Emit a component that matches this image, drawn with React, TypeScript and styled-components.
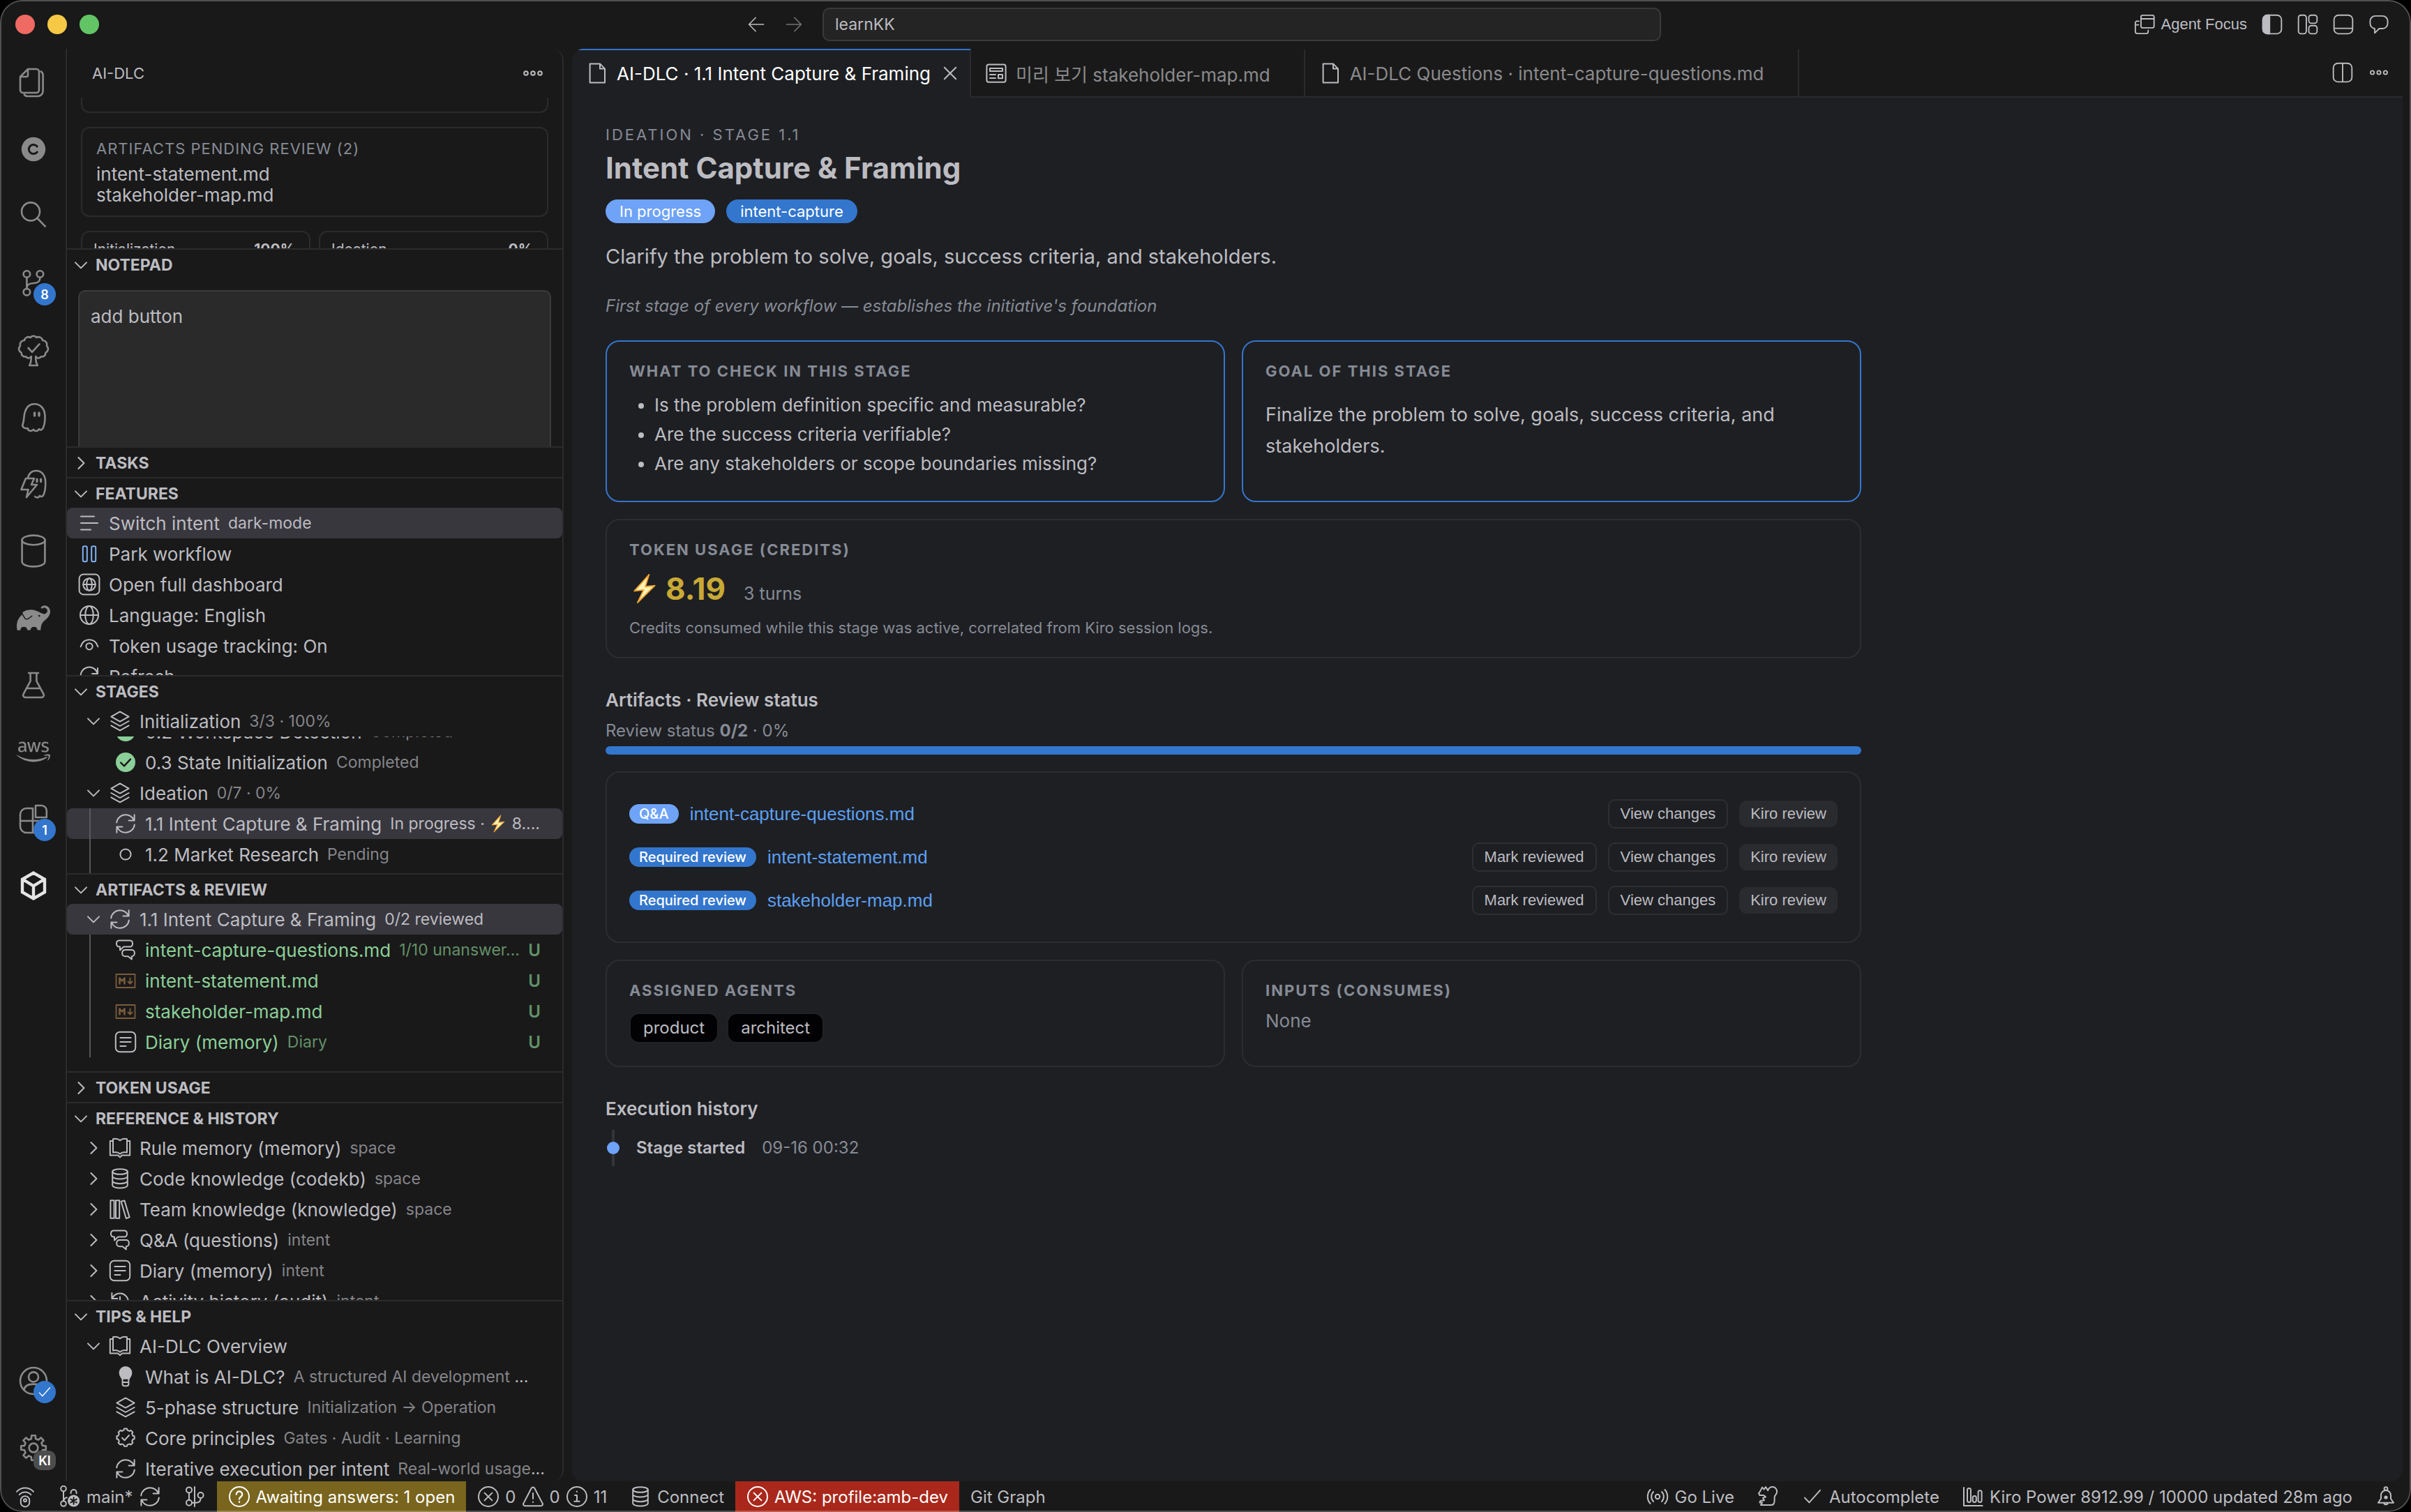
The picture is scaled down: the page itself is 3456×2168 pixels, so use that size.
import React from 'react';
import styled, { createGlobalStyle, css } from 'styled-components';
import { SiGradle } from 'react-icons/si';
import { FaAws } from 'react-icons/fa';

const c = {
  chrome: '#191919',
  editor: '#1e1f23',
  line: '#2b2b2c',
  text: '#bcbcc1',
  dim: '#85858a',
  slate: '#868b95',
  blue: '#3376cd',
  sky: '#6ea3f7',
  link: '#5b9ff2',
  green: '#8bcf98',
  greenDim: '#639068',
  selected: '#38373e',
  icon: '#8a8a8a',
};
const ui = `Inter, "Noto Sans CJK KR", sans-serif`;
const system = `"Liberation Sans", Arial, sans-serif`;

const Global = createGlobalStyle`
  * { box-sizing: border-box; }
  body { margin: 0; background: #000; color: ${c.text}; font-family: ${ui}; }
  button { font: inherit; color: inherit; background: none; border: 0; padding: 0; margin: 0; text-align: left; cursor: pointer; }
  ul { list-style: none; margin: 0; padding: 0; }
  h1, h2, h3, p { margin: 0; font-weight: 400; }
`;

/* ---------- icons ---------- */

const Svg = styled.svg<{ $s?: number }>`
  width: ${p => p.$s ?? 32}px;
  height: ${p => p.$s ?? 32}px;
  flex: none;
  display: block;
  fill: none;
  stroke: currentColor;
  stroke-linecap: round;
  stroke-linejoin: round;
`;

const small: Record<string, React.ReactNode> = {
  chevronDown: <path d="M4 6.2l4 4 4-4" />,
  chevronRight: <path d="M6.2 4l4 4-4 4" />,
  more: <><circle cx="3" cy="8" r="1.4" /><circle cx="8" cy="8" r="1.4" /><circle cx="13" cy="8" r="1.4" /></>,
  arrowLeft: <path d="M14.500 8H2M7.500 2L1.600 8l5.900 6" />,
  arrowRight: <path d="M1.500 8H14M8.500 2l5.900 6-5.900 6" />,
  close: <path d="M3.900 3.900l8.200 8.200M12.100 3.900l-8.200 8.200" />,
  file: <path d="M2.8 1.2h7.2l3.5 3.6v10H2.8zM10 1.2v3.6h3.5" />,
  preview: <><rect x="1.2" y="1.8" width="13.6" height="12.6" rx="1.4" /><path d="M3.5 4.5h9v2h-9zM3.5 9h4M3.5 11.5h4M9.5 9h3v2.6h-3z" /></>,
  list: <path d="M2 3.3h9.5M2 8h12M2 12.7h7" />,
  pause: <><rect x="3.4" y="2.6" width="3" height="11" rx="1" /><rect x="9.6" y="2.6" width="3" height="11" rx="1" /></>,
  dashboard: <><rect x=".8" y=".8" width="14.4" height="14.4" rx="3" /><circle cx="8" cy="8" r="4.4" /><ellipse cx="8" cy="8" rx="1.9" ry="4.4" /><path d="M3.6 8h8.8" /></>,
  globe: <><circle cx="8" cy="8" r="6.5" /><ellipse cx="8" cy="8" rx="2.9" ry="6.5" /><path d="M1.5 8h13" /></>,
  eye: <><path d="M1.8 8.6C2.8 5.4 5.2 3.6 8 3.6s5.2 1.8 6.2 5" /><circle cx="8" cy="8.4" r="2.3" /></>,
  refresh: <path d="M1.8 8A6.2 6.2 0 0 1 14 6M14 2v4h-4M14 9a6.2 6.2 0 0 1-2 4" />,
  sync: <path d="M1.600 7.200C2 4 4.700 1.600 8 1.600c2.500 0 4.700 1.400 5.800 3.600M14.300 1.600v4.200h-4M14.400 8.800C14 12 11.300 14.400 8 14.400c-2.500 0-4.700-1.400-5.800-3.600M1.700 14.400v-4.200h4" />,
  layers: <path d="M8 1.200l6.300 3.600L8 8.300 1.700 4.800zM1.700 8l6.300 3.500L14.300 8M1.700 11.200l6.300 3.500 6.300-3.500" />,
  circle: <circle cx="8" cy="8" r="3.800" />,
  check: <path d="M2.500 8.800l3.200 3.400 7.800-8.800" />,
  checkFilled: <><circle cx="8" cy="8" r="7" fill="currentColor" stroke="none" /><path d="M4.600 8.300l2.400 2.400 4.500-4.900" stroke="#191919" strokeWidth="1.200" /></>,
  discuss: <path d="M3.500 1.200h7.500a2 2 0 0 1 2 2v.6a2 2 0 0 1-2 2H6.600L4 8.200V5.800h-.5a2 2 0 0 1-2-2v-.6a2 2 0 0 1 2-2zM7.600 8h4.800a2 2 0 0 1 2 2v.6a2 2 0 0 1-2 2v2.200l-2.600-2.200H7.600a2 2 0 0 1-2-2V10a2 2 0 0 1 2-2z" />,
  note: <><rect x=".9" y=".9" width="14.200" height="14.200" rx="3" /><path d="M4.200 5h7.600M4.200 8h7.600M4.200 11h4" /></>,
  book: <path d="M8 2.600C6.800 1.500 4.800 1.200 3 1.600v9.600c1.800-.4 3.800 0 5 1.100 1.200-1.100 3.200-1.500 5-1.100V1.600c-1.800-.4-3.800-.1-5 1zM3 3H.9v10.200h5.600L8 14.600l1.500-1.400h5.600V3H13" />,
  database: <><ellipse cx="8" cy="3" rx="5.400" ry="1.900" /><path d="M2.600 3v9.800c0 1.100 2.400 2 5.400 2s5.400-.9 5.400-2V3M2.600 6.300c0 1.100 2.400 2 5.400 2s5.400-.9 5.400-2M2.600 9.600c0 1.100 2.400 2 5.400 2s5.400-.9 5.400-2" /></>,
  library: <path d="M1.200 1.600h2.600v12.800H1.200zM5 1.600h2.600v12.800H5zM8.800 2.400l2.400-.7 3.600 12-2.400.8z" />,
  history: <path d="M2.200 2v4h4M2.400 6A6 6 0 1 1 2 9M8 4.800V8.500l2.500 1.500" />,
  bulb: <><path d="M8 1a4.200 4.200 0 0 1 4.200 4.200c0 1.800-1.100 3-1.700 4.200h-5c-.6-1.200-1.700-2.400-1.700-4.200A4.200 4.200 0 0 1 8 1z" fill="currentColor" /><path d="M5.800 9.500v3.700A1.400 1.400 0 0 0 7.200 14.600h1.600a1.400 1.400 0 0 0 1.400-1.400V9.500M5.800 12h4.400" /></>,
  question: <><circle cx="8" cy="8" r="7" /><path d="M5.900 6.300a2.100 2.100 0 1 1 3.200 1.800c-.8.500-1.100.9-1.100 1.600M8 11.700v.2" strokeWidth="1.200" /></>,
  error: <><circle cx="8" cy="8" r="7" /><path d="M5.300 5.300l5.400 5.400M10.700 5.300l-5.400 5.400" /></>,
  warning: <path d="M6.900 1.900L1.200 12.800a1.200 1.200 0 0 0 1.100 1.800h11.400a1.200 1.200 0 0 0 1.100-1.800L9.100 1.900a1.250 1.250 0 0 0-2.200 0zM8 5.500v4M8 11.800v.2" />,
  info: <><circle cx="8" cy="8" r="7" /><path d="M6.500 7H8v4.400M6.200 11.400h3.600M7.900 4.300v.2" /></>,
  remote: <><path d="M2 4.400a8 8 0 0 1 12 0M3.900 6.600a5.500 5.500 0 0 1 8.200 0" /><rect x="4.900" y="7.600" width="6.200" height="7.600" rx="3" /><circle cx="8" cy="10.600" r="1" /></>,
  gitStar: <><circle cx="3.500" cy="2.300" r="1.900" /><circle cx="3.500" cy="13" r="1.900" /><path d="M3.500 4.200v6.900M3.500 11c.3-1.400 1-2 2.400-2.400M8.800 5.600V5a2 2 0 0 1 4 0v.6" /><circle cx="10.800" cy="11" r="4.300" fill="currentColor" stroke="none" /><path d="M10.800 8.600v4.800M8.700 9.800l4.200 2.400M12.900 9.800l-4.200 2.400" stroke="#191919" /></>,
  branchLine: <><circle cx="4" cy="3.200" r="2" /><circle cx="4" cy="12.400" r="2" /><circle cx="12.300" cy="7" r="2" /><path d="M4 5.200v5.200M8 1v14M12.300 9c0 2.600-1.200 3.400-4.300 3.400H6" /></>,
  broadcast: <><circle cx="8" cy="8" r="1.600" /><path d="M5 11.500a5 5 0 0 1 0-7M11 4.500a5 5 0 0 1 0 7M2.800 13a7.500 7.500 0 0 1 0-10M13.200 3a7.500 7.500 0 0 1 0 10" /></>,
  fox: <path d="M2.500 4.200L4 1.300l1.300 1.500L6.500 1l1.600 2.600C8.600 2 9.800 1 11.400 1c2.300 0 3.700 2.400 2.900 4.600-.5 1.300-1.500 1.500-1.500 2.900v2.300c0 2-.6 3.200-2.300 3.200H3l1-1.800H2.200l.5-1.200 2.800-.4-1-1.600 2-.8-1.500-1.200H2.200L1.500 5.500z" />,
  chart: <><path d="M1.500 1.500v13h13.300" /><rect x="4" y="2" width="2.500" height="10" rx="1.200" /><rect x="7.900" y="7.500" width="2.500" height="4.500" rx="1.200" /><rect x="11.800" y="3.600" width="2.500" height="8.400" rx="1.200" /></>,
  bell: <><path d="M2.500 12.400l2-3V7a3.500 3.500 0 0 1 7 0v2.400l2 3zM6.600 12.600a1.450 1.450 0 0 0 2.800 0" /><circle cx="8" cy="2.300" r="1.200" /><circle cx="8" cy="8.500" r="1.300" fill="currentColor" stroke="none" /></>,
  agent: <><rect x="5.300" y="1" width="10" height="9.600" rx="1.300" /><path d="M5.300 3.700h10M3.800 5.500H2.500A1.300 1.300 0 0 0 1 6.800V13.500A1.500 1.500 0 0 0 2.500 15h6.800a1.500 1.500 0 0 0 1.500-1.500v-1M1 8.300h2.500" /></>,
  layoutLeft: <><rect x=".9" y=".9" width="14.200" height="14.200" rx="3.400" /><path d="M4.300.9H6v14.200H4.300A3.400 3.400 0 0 1 .9 11.700V4.300A3.400 3.400 0 0 1 4.300.9z" fill="currentColor" /></>,
  layoutGrid: <><rect x=".9" y=".9" width="6" height="14.200" rx="1.900" /><rect x="8.800" y=".9" width="6.300" height="6.200" rx="1.900" /><rect x="8.800" y="8.900" width="6.300" height="6.200" rx="1.900" /></>,
  layoutBottom: <><rect x=".9" y=".9" width="14.200" height="14.200" rx="3.400" /><path d="M1 11h14" /></>,
  split: <><rect x=".9" y=".9" width="14.200" height="14.200" rx="3.400" /><path d="M8 1v14" /></>,
  chat: <path d="M5.300 1.500h5.400a4 4 0 0 1 4 4v1.700a4 4 0 0 1-4 4H8.200L4.800 14.600v-3.400a4 4 0 0 1-3.500-4V5.500a4 4 0 0 1 4-4z" />,
};

const Icon = ({ n, s }: { n: string; s?: number }) => (
  <Svg $s={s} viewBox="0 0 16 16" strokeWidth="1" aria-hidden="true">{small[n]}</Svg>
);

const notched = (cx: number, cy: number, teeth: number, outer: number, inner: number) => {
  const pts: string[] = [];
  const step = (Math.PI * 2) / teeth;
  for (let i = 0; i < teeth; i++) {
    const a = i * step - Math.PI / 2;
    [[-0.3, inner], [-0.2, outer], [0.2, outer], [0.3, inner]].forEach(([k, r]) =>
      pts.push(`${(cx + r * Math.cos(a + k * step)).toFixed(2)} ${(cy + r * Math.sin(a + k * step)).toFixed(2)}`));
  }
  return `M${pts.join('L')}Z`;
};

const Seal = () => (
  <Svg viewBox="0 0 16 16" strokeWidth="1" aria-hidden="true">
    <path d={notched(8, 7.6, 8, 6.4, 5.4)} /><path d="M5.500 7.800l1.800 1.800 3.200-3.600" />
  </Svg>
);

const Markdown = () => (
  <Svg viewBox="0 0 32 32" strokeWidth="1.800" color="#7a5c3c" aria-hidden="true">
    <path d="M2.500 7h27v19h-27z" /><path d="M7.500 20.500v-8l3.500 4 3.500-4v8" strokeWidth="2.600" /><path d="M22.500 12.500v8M19.500 17.500l3 3 3-3" strokeWidth="2" />
  </Svg>
);

const Bolt = ({ s }: { s: number }) => (
  <Svg $s={s} viewBox="0 0 24 24" strokeWidth="1" aria-hidden="true">
    <path d="M15.500 1L4 13.800l7.200-.8L6.500 23 20 9.600l-7.500.9z" fill="#fdf2b4" stroke="#f2a431" />
  </Svg>
);

const big: Record<string, React.ReactNode> = {
  files: <><path d="M8 2.500h6a2 2 0 0 1 2 2v13a2 2 0 0 1-2 2H4.500a2 2 0 0 1-2-2V8zM8 2.500V7a1 1 0 0 1-1 1H2.500" /><path d="M17.300 4.200a3 3 0 0 1 1.500 2.600v11.400a3.800 3.800 0 0 1-3.800 3.800H8a3 3 0 0 1-2.600-1.300" /></>,
  copyright: <><circle cx="12" cy="12" r="8.600" fill="currentColor" stroke="none" /><path d="M14.600 10a3.300 3.300 0 1 0 0 4" stroke="#191919" strokeWidth="1.500" /></>,
  search: <><circle cx="10" cy="8.700" r="6.500" /><path d="M14.800 13.500l5.600 5.800" /></>,
  git: <><circle cx="7.200" cy="5.500" r="2.400" /><circle cx="16.700" cy="5.500" r="2.400" /><circle cx="7.200" cy="18.400" r="2.400" /><path d="M7.200 7.900V16M16.700 7.900c0 3-1.300 4-4.500 4.100-3.200.1-5 .8-5 3.500" /></>,
  tree: <path d="M10.300 17c-1.300 1.100-2.800.9-3.700-.3-1.900.3-3.400-1-3.300-2.900-2-1-2.300-3.300-.8-4.900-.5-2.200.9-3.800 3-3.900.5-2.100 2.600-3 4.400-2 .8-1.500 3.400-1.500 4.200 0 1.800-1 3.900-.1 4.400 2 2.100.1 3.500 1.700 3 3.900 1.500 1.600 1.200 3.900-.8 4.900.1 1.900-1.400 3.200-3.300 2.900-.9 1.200-2.400 1.400-3.700.3M10.300 16.500c.3 2.500-.2 4.700-1.200 6.500h5.800c-1-1.800-1.500-4-1.200-6.500M8.300 10.500l2.700 2.900 5.200-5.700" />,
  ghost: <><path d="M12.600 2.600c4.500 0 7.300 3.400 7.600 8 .2 3.400-.1 6.300-1.200 8.900-.7 1.700-2 2.200-3 1.100-.9 1.700-3.100 1.900-4 .3-1.100 1.400-4 1.600-4.100-.9-2.500.6-4.400-1-3.500-3.200 1-2.300.5-5.500 1.500-8.500 1.100-3.500 3.500-5.700 6.700-5.700z" /><path d="M12.800 9v2M16 9v2" strokeWidth="1.700" /></>,
  ghostBolt: <><path d="M8 8C8.600 4.300 11 2.500 14 2.500c4 0 6.500 3.400 6.600 8 .1 3.800-.3 6.500-1.200 8.800-.6 1.700-1.900 2.200-2.900 1.100-.8 1.500-2.400 1.700-3.400.6M8 8h4.500l-2 4.500h4L7 21.500l1.300-5.500H3.200L6.500 8z" /><path d="M14.500 8.500v1.800M17.300 8.500v1.800" strokeWidth="1.600" /></>,
  cylinder: <><ellipse cx="12" cy="4.200" rx="8.200" ry="3.400" /><path d="M3.800 4.200v15.600c0 1.900 3.700 3.400 8.200 3.400s8.200-1.500 8.200-3.400V4.200" /></>,
  flask: <path d="M8.500 3.500h7M9.800 3.500v5.800L4.800 18.600a1.600 1.600 0 0 0 1.400 2.400h11.600a1.600 1.600 0 0 0 1.400-2.400L14.200 9.300V3.500M7.300 14.500h9.400" />,
  extensions: <path d="M11.500 4.500H7a4.500 4.500 0 0 0-4.500 4.500v8.500A4.500 4.500 0 0 0 7 22h9a4 4 0 0 0 4-4v-4.500H2.500M11.500 4.500V22M13.500 2.500h4.200a3.700 3.700 0 0 1 3.700 3.700V11h-7.900z" />,
  cube: <path d="M12 2.800l8 4.600v9.200l-8 4.600-8-4.600V7.400zM4.500 7.500L12 12.200l7.500-4.700M12 12.200V21" strokeWidth="2.200" strokeLinejoin="miter" />,
  account: <><circle cx="12" cy="12" r="9.500" /><circle cx="12" cy="9.200" r="3.500" /><path d="M5.200 18.500c.4-2.700 3-4.200 6.800-4.200s6.400 1.500 6.800 4.200" /></>,
  gear: <><path d={notched(12, 12, 8, 9, 6.700)} /><circle cx="12" cy="12" r="3.200" /></>,
};
const BigIcon = ({ n }: { n: string }) => (
  <Svg $s={48} viewBox="0 0 24 24" strokeWidth="1.300" aria-hidden="true">{big[n]}</Svg>
);

/* ---------- window ---------- */

const Window = styled.div`
  position: relative;
  display: flex;
  flex-direction: column;
  height: 100vh;
  border-radius: 32px;
  overflow: hidden;
  background: ${c.chrome};
  &::after {
    content: '';
    position: absolute;
    inset: 0;
    border: 2px solid rgba(255, 255, 255, 0.24);
    border-radius: 32px;
    pointer-events: none;
  }
`;
const TitleBar = styled.header`
  flex: none;
  display: grid;
  grid-template-columns: 1fr auto 1fr;
  align-items: center;
  height: 70px;
`;
const Lights = styled.div`
  display: flex;
  gap: 18px;
  padding-left: 22px;
`;
const Light = styled.button<{ $c: string }>`
  width: 28px;
  height: 28px;
  border-radius: 50%;
  background: ${p => p.$c};
`;
const Nav = styled.div`
  display: flex;
  align-items: center;
  gap: 28px;
  padding-right: 4px;
`;
const IconButton = styled.button<{ $faded?: boolean }>`
  display: flex;
  align-items: center;
  gap: 8px;
  opacity: ${p => (p.$faded ? 0.55 : 1)};
`;
const Command = styled.button`
  width: 1202px;
  height: 48px;
  padding: 0 16px;
  border: 2px solid #3a3a3a;
  border-radius: 10px;
  background: #242424;
  font-size: 23px;
`;
const TitleActions = styled.div`
  display: flex;
  justify-content: flex-end;
  gap: 21px;
  padding-right: 31px;
  font: 22px ${system};
`;
const Body = styled.div`
  flex: 1;
  min-height: 0;
  display: flex;
`;

/* ---------- activity bar ---------- */

const Activity = styled.nav`
  flex: none;
  display: flex;
  flex-direction: column;
  width: 96px;
  border-right: 2px solid ${c.line};
  color: ${c.icon};
`;
const Spacer = styled.div`
  flex: 1;
`;
const ActivityItem = styled.button<{ $on?: boolean }>`
  position: relative;
  display: flex;
  align-items: center;
  justify-content: center;
  height: 96px;
  padding-left: 2px;
  color: ${p => (p.$on ? '#e4e4e4' : 'inherit')};
`;
const Badge = styled.span<{ $gray?: boolean }>`
  position: absolute;
  right: 14px;
  top: 48px;
  display: flex;
  align-items: center;
  justify-content: center;
  width: 32px;
  height: 32px;
  border-radius: 16px;
  background: ${c.blue};
  color: #fff;
  font-size: 18px;
  font-weight: 600;
  ${p => p.$gray && css`
    top: 52px;
    height: 28px;
    border-radius: 10px;
    background: #4d4d4d;
  `}
`;

/* ---------- sidebar ---------- */

const Side = styled.aside`
  flex: none;
  display: flex;
  flex-direction: column;
  width: 712px;
  border-right: 2px solid ${c.line};
  border-radius: 0 16px 16px 0;
  font-size: 26px;
`;
const SideTitle = styled.div`
  flex: none;
  display: flex;
  align-items: center;
  justify-content: space-between;
  height: 70px;
  padding: 0 26px 0 36px;
  font-size: 22px;
`;
const PaneHead = styled.button`
  flex: none;
  display: flex;
  align-items: center;
  gap: 5px;
  height: 44px;
  padding: 2px 4px 0;
  border-top: 2px solid ${c.line};
  font-size: 23px;
  font-weight: 700;
`;
const Pane = styled.div<{ $grow?: number }>`
  flex: ${p => p.$grow ?? 240} 1 0;
  min-height: 0;
  overflow: hidden;
`;
const Overview = styled.div`
  display: grid;
  grid-template-columns: 1fr 1fr;
  gap: 20px 12px;
  padding: 0 20px;
`;
const SideCard = styled.div<{ $cut?: boolean }>`
  grid-column: 1 / -1;
  padding: 14px 20px;
  border: 2px solid ${c.line};
  border-radius: 12px;
  line-height: 30px;
  ${p => p.$cut && css`
    height: 22px;
    padding: 0;
    border-top: 0;
    border-radius: 0 0 12px 12px;
  `}
`;
const SideCardTitle = styled.h3`
  margin-bottom: 7px;
  color: ${c.slate};
  font-size: 22px;
  letter-spacing: 1px;
`;
const PhaseCard = styled.div`
  display: flex;
  justify-content: space-between;
  padding: 10px 20px 12px 16px;
  border: 2px solid ${c.line};
  border-radius: 12px;
  font-size: 21px;
  line-height: 30px;
`;
const Notes = styled.textarea`
  display: block;
  width: calc(100% - 32px);
  height: 260px;
  margin: 16px;
  padding: 18px 16px;
  border: 2px solid #3b3b3b;
  border-radius: 10px;
  background: #2a2a2a;
  color: inherit;
  font: 26px/36px ${ui};
  resize: none;
`;
const Row = styled.button<{ $left: number; $selected?: boolean; $guide?: boolean }>`
  position: relative;
  display: flex;
  align-items: center;
  width: 100%;
  height: 44px;
  padding: 0 28px 0 ${p => p.$left}px;
  border-radius: 8px;
  white-space: pre;
  background: ${p => (p.$selected ? c.selected : 'none')};
  ${p => p.$guide && css`
    &::before {
      content: '';
      position: absolute;
      left: 32px;
      top: 0;
      bottom: 0;
      width: 2px;
      background: #58585a;
    }
  `}
`;
const Tint = styled.span<{ $c?: string }>`
  display: flex;
  color: ${p => p.$c ?? 'inherit'};
`;
const Twistie = styled.span`
  margin-right: 6px;
`;
const Label = styled.span<{ $green?: boolean }>`
  margin-left: 12px;
  color: ${p => (p.$green ? c.green : 'inherit')};
`;
const Desc = styled.span<{ $c?: string }>`
  display: flex;
  align-items: center;
  margin-left: 12px;
  font-size: 23px;
  color: ${p => p.$c ?? c.dim};
`;
const GitFlag = styled.span`
  margin-left: auto;
  width: 24px;
  text-align: center;
  color: ${c.greenDim};
  font-size: 24px;
  font-weight: 600;
`;
const Sliding = styled.div`
  overflow: hidden;
  & > ul { margin-top: -29px; }
`;

type RowProps = {
  icon: string;
  label: string;
  desc?: React.ReactNode;
  level?: 'flat' | 'group' | 'leaf';
  open?: boolean;
  selected?: boolean;
  guide?: boolean;
  tint?: string;
  flag?: boolean;
};
const left = { flat: 16, group: 22, leaf: 68 };
const TreeRow = ({ icon, label, desc, level = 'leaf', open, selected, guide, tint, flag }: RowProps) => (
  <li>
    <Row $left={left[level]} $selected={selected} $guide={guide}>
      {level === 'group' && <Twistie><Icon n={open ? 'chevronDown' : 'chevronRight'} /></Twistie>}
      <Tint $c={tint}>{icon === 'md' ? <Markdown /> : icon === 'seal' ? <Seal /> : <Icon n={icon} />}</Tint>
      <Label $green={flag}>{label}</Label>
      {desc && <Desc $c={flag ? c.greenDim : selected ? c.text : undefined}>{desc}</Desc>}
      {flag && <GitFlag>U</GitFlag>}
    </Row>
  </li>
);
const Head = ({ children, open = true }: { children: React.ReactNode; open?: boolean }) => (
  <PaneHead aria-expanded={open}><Icon n={open ? 'chevronDown' : 'chevronRight'} />{children}</PaneHead>
);
const Bright = styled.span`
  color: ${c.text};
`;

/* ---------- editor ---------- */

const Editor = styled.section`
  flex: 1;
  min-width: 0;
  display: flex;
  flex-direction: column;
  margin: 0 12px;
  border-radius: 16px;
  overflow: hidden;
  background: ${c.editor};
`;
const Tabs = styled.div`
  flex: none;
  display: flex;
  height: 70px;
  background: ${c.chrome};
`;
const Tab = styled.button<{ $on?: boolean }>`
  display: flex;
  align-items: center;
  gap: 12px;
  padding: 0 ${p => (p.$on ? 12 : 48)}px 0 20px;
  border-right: 2px solid ${c.line};
  border-bottom: 2px solid ${p => (p.$on ? c.editor : c.line)};
  border-top: 2px solid ${p => (p.$on ? c.blue : 'transparent')};
  background: ${p => (p.$on ? c.editor : 'none')};
  color: ${p => (p.$on ? '#fff' : '#8a8a8c')};
  font-size: 26px;
  white-space: nowrap;
  svg { color: ${c.text}; }
`;
const TabActions = styled.div`
  flex: 1;
  display: flex;
  align-items: center;
  justify-content: flex-end;
  gap: 22px;
  padding-right: 19px;
  border-bottom: 2px solid ${c.line};
`;
const Page = styled.main`
  width: 100%;
  max-width: 1896px;
  padding: 36px 48px;
`;
const Eyebrow = styled.p`
  color: ${c.slate};
  font-size: 22px;
  line-height: 34px;
  letter-spacing: 3px;
`;
const Title = styled.h1`
  margin-top: 6px;
  font-size: 42px;
  font-weight: 700;
  line-height: 50px;
`;
const Pills = styled.div`
  display: flex;
  gap: 16px;
  margin-top: 20px;
`;
const Pill = styled.span<{ $sky?: boolean; $small?: boolean }>`
  padding: 0 20px;
  border-radius: 17px;
  background: ${p => (p.$sky ? c.sky : c.blue)};
  color: #fff;
  font-size: 22px;
  line-height: 34px;
  ${p => p.$small && css`
    padding: 0 14px;
    font-size: 20px;
    font-weight: 500;
    line-height: 28px;
  `}
`;
const Lead = styled.p`
  margin-top: 26px;
  font-size: 29px;
  line-height: 44px;
`;
const Aside = styled.p`
  margin: 31px 0;
  color: ${c.slate};
  font-size: 24px;
  font-style: italic;
  line-height: 36px;
`;
const Grid = styled.div`
  display: grid;
  grid-template-columns: 1fr 1fr;
  gap: 24px;
  margin-bottom: 24px;
`;
const Card = styled.section<{ $accent?: boolean }>`
  padding: 24px 32px;
  border: 2px solid ${p => (p.$accent ? c.blue : '#2d2d2f')};
  border-radius: 20px;
`;
const CardTitle = styled.h2`
  color: ${c.slate};
  font-size: 22px;
  font-weight: 700;
  line-height: 36px;
  letter-spacing: 2px;
`;
const Checks = styled.ul`
  margin: 10px 0 8px;
  padding-left: 36px;
  list-style: disc;
  font-size: 26px;
  line-height: 42px;
`;
const Goal = styled.p`
  margin-top: 22px;
  font-size: 27px;
  line-height: 45px;
`;
const Usage = styled.div`
  display: flex;
  align-items: baseline;
  gap: 26px;
  margin: 8px 0;
  color: ${c.slate};
  font-size: 25px;
  line-height: 36px;
`;
const Credits = styled.strong`
  display: flex;
  align-items: baseline;
  gap: 8px;
  color: #c9a935;
  font-size: 44px;
  line-height: 60px;
  svg { align-self: center; }
`;
const Muted = styled.p<{ $gap?: number; $size?: number }>`
  margin-top: ${p => p.$gap ?? 0}px;
  color: ${c.slate};
  font-size: ${p => p.$size ?? 22}px;
  line-height: 36px;
`;
const Section = styled.h2`
  margin-top: 40px;
  font-size: 26px;
  font-weight: 600;
  line-height: 40px;
`;
const Bar = styled.div`
  height: 12px;
  margin: 4px 0 24px;
  border-radius: 6px;
  background: ${c.blue};
`;
const Files = styled.ul`
  margin: 4px 0;
`;
const FileRow = styled.li`
  display: flex;
  align-items: center;
  gap: 16px;
  height: 62px;
`;
const FileLink = styled.a`
  margin-right: auto;
  color: ${c.link};
  font: 26px ${system};
  text-decoration: none;
`;
const Button = styled.button<{ $solid?: boolean }>`
  padding: 0 16px;
  border: ${p => (p.$solid ? '0' : '2px solid #2f2f31')};
  border-radius: 10px;
  background: ${p => (p.$solid ? '#2a2b2f' : 'none')};
  font: 22px/38px ${system};
`;
const Spaced = styled(Grid)`
  margin: 24px 0 0;
`;
const Chips = styled.div`
  display: flex;
  gap: 12px;
  margin: 14px 0 8px;
`;
const Chip = styled.span`
  padding: 0 18px;
  border: 2px solid #222225;
  border-radius: 14px;
  background: #020204;
  font-size: 24px;
  line-height: 40px;
`;
const Timeline = styled.ol`
  margin: 10px 0 0;
  padding: 0;
  list-style: none;
`;
const Event = styled.li`
  display: flex;
  align-items: center;
  gap: 24px;
  color: ${c.slate};
  font-size: 24px;
  line-height: 52px;
  strong { color: ${c.text}; font-weight: 600; }
`;
const Marker = styled.span`
  align-self: stretch;
  display: flex;
  align-items: center;
  justify-content: center;
  width: 22px;
  margin-right: -2px;
  background: linear-gradient(#333437, #333437) center / 4px 100% no-repeat;
  &::before {
    content: '';
    width: 18px;
    height: 18px;
    border-radius: 50%;
    background: ${c.sky};
  }
`;

/* ---------- status bar ---------- */

const Status = styled.footer`
  flex: none;
  display: flex;
  height: 44px;
  padding: 0 4px;
  font-size: 24px;
  white-space: nowrap;
`;
const StatusItem = styled.button<{ $bg?: string }>`
  display: flex;
  align-items: center;
  gap: 8px;
  padding: 0 16px;
  background: ${p => p.$bg ?? 'none'};
  color: ${p => (p.$bg ? '#fff' : 'inherit')};
`;

const activity = ['files', 'copyright', 'search', 'git', 'tree', 'ghost', 'ghostBolt', 'cylinder', 'gradle', 'flask', 'aws', 'extensions', 'cube'];
const counts: Record<string, string> = { git: '8', extensions: '1' };

const artifacts = [
  { tag: 'Q&A', name: 'intent-capture-questions.md' },
  { tag: 'Required review', name: 'intent-statement.md' },
  { tag: 'Required review', name: 'stakeholder-map.md' },
];

export default function App() {
  return (
    <Window>
      <Global />
      <TitleBar>
        <Lights>
          <Light $c="#ee6a63" aria-label="Close window" />
          <Light $c="#f5c945" aria-label="Minimize window" />
          <Light $c="#63c466" aria-label="Zoom window" />
        </Lights>
        <Nav>
          <IconButton aria-label="Back"><Icon n="arrowLeft" s={26} /></IconButton>
          <IconButton $faded aria-label="Forward"><Icon n="arrowRight" s={26} /></IconButton>
          <Command>learnKK</Command>
        </Nav>
        <TitleActions>
          <IconButton><Icon n="agent" s={30} />Agent Focus</IconButton>
          <IconButton aria-label="Toggle side bar"><Icon n="layoutLeft" s={30} /></IconButton>
          <IconButton aria-label="Customize layout"><Icon n="layoutGrid" s={30} /></IconButton>
          <IconButton aria-label="Toggle panel"><Icon n="layoutBottom" s={30} /></IconButton>
          <IconButton aria-label="Chat"><Icon n="chat" s={30} /></IconButton>
        </TitleActions>
      </TitleBar>

      <Body>
        <Activity>
          {activity.map(n => (
            <ActivityItem key={n} $on={n === 'cube'} aria-label={n}>
              {n === 'gradle' ? <SiGradle size={48} /> : n === 'aws' ? <FaAws size={48} /> : <BigIcon n={n} />}
              {counts[n] && <Badge>{counts[n]}</Badge>}
            </ActivityItem>
          ))}
          <Spacer />
          <ActivityItem aria-label="Account"><BigIcon n="account" /><Badge><Icon n="check" s={22} /></Badge></ActivityItem>
          <ActivityItem aria-label="Settings"><BigIcon n="gear" /><Badge $gray>KI</Badge></ActivityItem>
        </Activity>

        <Side>
          <SideTitle>AI-DLC<IconButton aria-label="More actions"><Icon n="more" /></IconButton></SideTitle>
          <Pane $grow={216}>
            <Overview>
              <SideCard $cut />
              <SideCard>
                <SideCardTitle>ARTIFACTS PENDING REVIEW (2)</SideCardTitle>
                <div>intent-statement.md</div>
                <div>stakeholder-map.md</div>
              </SideCard>
              <PhaseCard><span>Initialization</span><b>100%</b></PhaseCard>
              <PhaseCard><span>Ideation</span><b>0%</b></PhaseCard>
            </Overview>
          </Pane>

          <Head>NOTEPAD</Head>
          <Pane><Notes aria-label="Notepad" defaultValue="add button" /></Pane>

          <Head open={false}>TASKS</Head>

          <Head>FEATURES</Head>
          <Pane>
            <ul>
              <TreeRow level="flat" icon="list" label="Switch intent" desc="dark-mode" selected />
              <TreeRow level="flat" icon="pause" label="Park workflow" tint="#7fb2f5" />
              <TreeRow level="flat" icon="dashboard" label="Open full dashboard" />
              <TreeRow level="flat" icon="globe" label="Language: English" />
              <TreeRow level="flat" icon="eye" label="Token usage tracking: On" />
              <TreeRow level="flat" icon="refresh" label="Refresh" />
            </ul>
          </Pane>

          <Head>STAGES</Head>
          <Pane>
            <ul><TreeRow level="group" open icon="layers" label="Initialization" desc="3/3 · 100%" /></ul>
            <Sliding>
              <ul>
                <TreeRow icon="checkFilled" tint={c.green} label="0.2 Workspace Detection" desc="Completed" />
                <TreeRow icon="checkFilled" tint={c.green} label="0.3 State Initialization" desc="Completed" />
                <TreeRow level="group" open icon="layers" label="Ideation" desc="0/7 · 0%" />
                <TreeRow icon="sync" label="1.1 Intent Capture & Framing" desc={<>In progress · <Bolt s={26} /> 8....</>} selected guide />
                <TreeRow icon="circle" label="1.2 Market Research" desc="Pending" guide />
                <TreeRow icon="circle" label="" guide />
              </ul>
            </Sliding>
          </Pane>

          <Head>ARTIFACTS &amp; REVIEW</Head>
          <Pane>
            <ul>
              <TreeRow level="group" open icon="sync" label="1.1 Intent Capture & Framing" desc="0/2 reviewed" selected />
              <TreeRow icon="discuss" label="intent-capture-questions.md" desc="1/10 unanswer..." guide flag />
              <TreeRow icon="md" label="intent-statement.md" guide flag />
              <TreeRow icon="md" label="stakeholder-map.md" guide flag />
              <TreeRow icon="note" label="Diary (memory)" desc="Diary" guide flag />
            </ul>
          </Pane>

          <Head open={false}>TOKEN USAGE</Head>

          <Head>REFERENCE &amp; HISTORY</Head>
          <Pane>
            <ul>
              <TreeRow level="group" icon="book" label="Rule memory (memory)" desc="space" />
              <TreeRow level="group" icon="database" label="Code knowledge (codekb)" desc="space" />
              <TreeRow level="group" icon="library" label="Team knowledge (knowledge)" desc="space" />
              <TreeRow level="group" icon="discuss" label="Q&A (questions)" desc="intent" />
              <TreeRow level="group" icon="note" label="Diary (memory)" desc="intent" />
              <TreeRow level="group" icon="history" label="Activity history (audit)" desc="intent" />
            </ul>
          </Pane>

          <Head>TIPS &amp; HELP</Head>
          <Pane $grow={216}>
            <ul>
              <TreeRow level="group" open icon="book" label="AI-DLC Overview" />
              <TreeRow icon="bulb" label="What is AI-DLC?" desc={<>A structured AI development <Bright>...</Bright></>} />
              <TreeRow icon="layers" label="5-phase structure" desc="Initialization → Operation" />
              <TreeRow icon="seal" label="Core principles" desc="Gates · Audit · Learning" />
              <TreeRow icon="sync" label="Iterative execution per intent" desc={<>Real-world usage<Bright>...</Bright></>} />
            </ul>
          </Pane>
        </Side>

        <Editor>
          <Tabs>
            <Tab $on><Icon n="file" />AI-DLC · 1.1 Intent Capture &amp; Framing<Icon n="close" /></Tab>
            <Tab><Icon n="preview" />미리 보기 stakeholder-map.md</Tab>
            <Tab><Icon n="file" />AI-DLC Questions · intent-capture-questions.md</Tab>
            <TabActions>
              <IconButton aria-label="Split editor"><Icon n="split" s={30} /></IconButton>
              <IconButton aria-label="More actions"><Icon n="more" s={30} /></IconButton>
            </TabActions>
          </Tabs>

          <Page>
            <Eyebrow>IDEATION · STAGE 1.1</Eyebrow>
            <Title>Intent Capture &amp; Framing</Title>
            <Pills><Pill $sky>In progress</Pill><Pill>intent-capture</Pill></Pills>
            <Lead>Clarify the problem to solve, goals, success criteria, and stakeholders.</Lead>
            <Aside>First stage of every workflow — establishes the initiative's foundation</Aside>

            <Grid>
              <Card $accent>
                <CardTitle>WHAT TO CHECK IN THIS STAGE</CardTitle>
                <Checks>
                  <li>Is the problem definition specific and measurable?</li>
                  <li>Are the success criteria verifiable?</li>
                  <li>Are any stakeholders or scope boundaries missing?</li>
                </Checks>
              </Card>
              <Card $accent>
                <CardTitle>GOAL OF THIS STAGE</CardTitle>
                <Goal>Finalize the problem to solve, goals, success criteria, and stakeholders.</Goal>
              </Card>
            </Grid>

            <Card>
              <CardTitle>TOKEN USAGE (CREDITS)</CardTitle>
              <Usage><Credits><Bolt s={44} /><span>8.19</span></Credits><span>3 turns</span></Usage>
              <Muted>Credits consumed while this stage was active, correlated from Kiro session logs.</Muted>
            </Card>

            <Section>Artifacts · Review status</Section>
            <Muted $gap={6} $size={24}>Review status <b>0/2</b> · 0%</Muted>
            <Bar role="progressbar" aria-label="Review status" aria-valuenow={0} />

            <Card>
              <Files>
                {artifacts.map(a => (
                  <FileRow key={a.name}>
                    <Pill $small $sky={a.tag === 'Q&A'}>{a.tag}</Pill>
                    <FileLink href="#">{a.name}</FileLink>
                    {a.tag !== 'Q&A' && <Button>Mark reviewed</Button>}
                    <Button>View changes</Button>
                    <Button $solid>Kiro review</Button>
                  </FileRow>
                ))}
              </Files>
            </Card>
            <Spaced>
              <Card>
                <CardTitle>ASSIGNED AGENTS</CardTitle>
                <Chips><Chip>product</Chip><Chip>architect</Chip></Chips>
              </Card>
              <Card>
                <CardTitle>INPUTS (CONSUMES)</CardTitle>
                <Muted $gap={8} $size={26}>None</Muted>
              </Card>
            </Spaced>

            <Section>Execution history</Section>
            <Timeline>
              <Event><Marker /><strong>Stage started</strong><time>09-16 00:32</time></Event>
            </Timeline>
          </Page>
        </Editor>
      </Body>

      <Status>
        <StatusItem aria-label="Remote"><Icon n="remote" /></StatusItem>
        <StatusItem><Icon n="gitStar" />main*<Icon n="sync" /></StatusItem>
        <StatusItem aria-label="Graph"><Icon n="branchLine" /></StatusItem>
        <StatusItem $bg="#79651d"><Icon n="question" />Awaiting answers: 1 open</StatusItem>
        <StatusItem><Icon n="error" />0<Icon n="warning" />0<Icon n="info" />11</StatusItem>
        <StatusItem><Icon n="database" />Connect</StatusItem>
        <StatusItem $bg="#a9281b"><Icon n="error" />AWS: profile:amb-dev</StatusItem>
        <StatusItem>Git Graph</StatusItem>
        <Spacer />
        <StatusItem><Icon n="broadcast" />Go Live</StatusItem>
        <StatusItem aria-label="Formatter"><Icon n="fox" /></StatusItem>
        <StatusItem><Icon n="check" />Autocomplete</StatusItem>
        <StatusItem><Icon n="chart" />Kiro Power 8912.99 / 10000 updated 28m ago</StatusItem>
        <StatusItem aria-label="Notifications"><Icon n="bell" /></StatusItem>
      </Status>
    </Window>
  );
}
